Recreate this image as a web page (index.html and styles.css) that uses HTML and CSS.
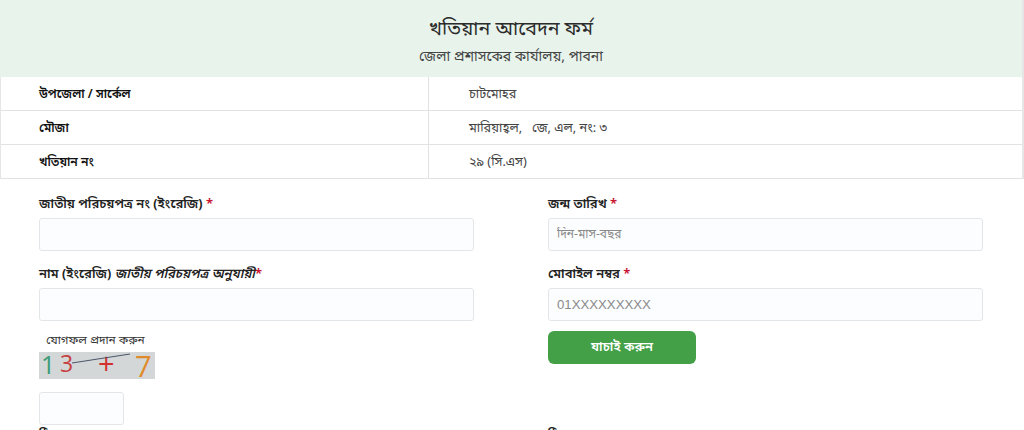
FILE: index.html
```html
<!DOCTYPE html>
<html lang="bn">
<head>
<meta charset="utf-8">
<title>খতিয়ান আবেদন ফর্ম</title>
<link rel="stylesheet" href="styles.css">
</head>
<body>
<div class="page">
  <header class="head">
    <h1 class="title">খতিয়ান আবেদন ফর্ম</h1>
    <p class="sub">জেলা প্রশাসকের কার্যালয়, পাবনা</p>
  </header>
  <div class="info">
    <div class="row"><div class="key">উপজেলা / সার্কেল</div><div class="val">চাটমোহর</div></div>
    <div class="row"><div class="key">মৌজা</div><div class="val">মারিয়াহ্বল,&nbsp;&nbsp; জে, এল, নং: ৩</div></div>
    <div class="row"><div class="key">খতিয়ান নং</div><div class="val">২৯ (সি.এস)</div></div>
  </div>
  <form class="form">
    <div class="col">
      <div class="field">
        <label class="label">জাতীয় পরিচয়পত্র নং (ইংরেজি) <span class="req">*</span></label>
        <input class="input" type="text">
      </div>
      <div class="field">
        <label class="label">নাম (ইংরেজি) <em>জাতীয় পরিচয়পত্র অনুযায়ী</em><span class="req">*</span></label>
        <input class="input" type="text">
      </div>
      <div class="captcha">
        <div class="cap-label">যোগফল প্রদান করুন</div>
        <svg class="cap-img" width="116" height="27" viewBox="0 0 116 27" aria-label="captcha">
          <rect width="116" height="27" fill="#d3d7d8"/>
          <text x="2" y="22" class="d1">1</text>
          <text x="21" y="20" class="d2">3</text>
          <text x="59" y="22" class="d3">+</text>
          <text x="96" y="25" class="d4">7</text>
          <line x1="33" y1="11" x2="91" y2="2" stroke="#4a5568" stroke-width="1"/>
        </svg>
        <input class="input small" type="text">
      </div>
      <div class="cut">ঠিকানা</div>
    </div>
    <div class="col">
      <div class="field">
        <label class="label">জন্ম তারিখ <span class="req">*</span></label>
        <input class="input bn" type="text" placeholder="দিন-মাস-বছর">
      </div>
      <div class="field">
        <label class="label">মোবাইল নম্বর <span class="req">*</span></label>
        <input class="input" type="text" placeholder="01XXXXXXXXX">
      </div>
      <button class="btn" type="button">যাচাই করুন</button>
      <div class="cut right">ঠিকানা</div>
    </div>
  </form>
</div>
</body>
</html>
```
FILE: styles.css
```css
html, body { margin: 0; padding: 0; height: 430px; overflow: hidden; background: #fff; }
body { font-family: "Noto Sans Bengali", "Noto Sans", "Liberation Sans", sans-serif; color: #222; }
.page { width: 1024px; }
.head { height: 77px; background: #e8f3ec; text-align: center; box-sizing: border-box; padding-top: 16px; border-right: 2px solid #e6e6e6; }
.title { margin: 0; font-size: 19.6px; line-height: 28px; font-weight: 400; color: #2b2b2b; }
.sub { margin: 4px 0 0; font-size: 14px; line-height: 20px; color: #444; }
.info { border-right: 2px solid #e6e6e6; border-left: 1px solid #e6e6e6; }
.row { display: grid; grid-template-columns: 428px 1fr; height: 34px; box-sizing: border-box; border-bottom: 1px solid #e2e2e2; align-items: stretch; }
.key { padding: 2px 0 0 38px; font-size: 12.2px; font-weight: 600; color: #111; display: flex; align-items: center; border-right: 1px solid #e2e2e2; }
.val { padding: 2px 0 0 40px; font-size: 12.7px; color: #444; display: flex; align-items: center; }
.form { display: grid; grid-template-columns: 435px 435px; column-gap: 74px; padding: 17px 0 0 39px; }
.col { display: flex; flex-direction: column; align-items: flex-start; }
.field { display: flex; flex-direction: column; width: 100%; margin-bottom: 15px; }
.label { font-size: 13px; line-height: 18px; font-weight: 600; color: #222; margin-bottom: 4px; }
.req { color: #c8102e; }
.input { width: 100%; height: 33px; box-sizing: border-box; border: 1px solid #e3e6e8; border-radius: 3px; background: #fbfdfe; padding: 0 8px; font-family: "Liberation Sans", sans-serif; font-size: 13.2px; }
.input::placeholder { color: #8a8a8a; opacity: 1; }
.input.bn { font-family: "Noto Sans Bengali", "Noto Sans", sans-serif; font-size: 12px; }
.captcha { display: flex; flex-direction: column; align-items: flex-start; margin-top: -3px; }
.cap-label { font-size: 11.8px; line-height: 16px; color: #333; padding-left: 7px; margin-bottom: 3px; }
.cap-img { display: block; overflow: visible; }
.cap-img text { font-family: "Open Sans", "Noto Sans", sans-serif; }
.d1 { font-size: 25px; fill: #3c9b74; }
.d2 { font-size: 23px; fill: #c5403f; }
.d3 { font-size: 29px; font-weight: 500; fill: #d2302e; }
.d4 { font-size: 29px; fill: #e08a2c; }
.input.small { width: 85px; height: 33px; margin-top: 13px; }
.cut { font-size: 13px; font-weight: 600; line-height: 18px; margin-top: 2px; }
.btn { width: 148px; height: 33px; border: 0; border-radius: 6px; background: #43a047; color: #fff; font-family: "Noto Sans Bengali", "Noto Sans", sans-serif; font-size: 13px; font-weight: 600; margin-top: -5px; }
.cut.right { margin-top: 63px; }
```
